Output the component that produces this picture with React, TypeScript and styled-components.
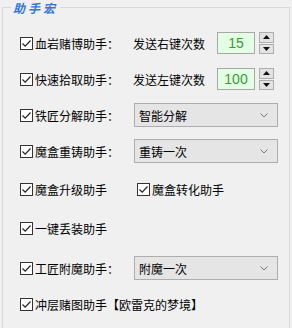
import React from 'react';
import styled, { createGlobalStyle } from 'styled-components';

const GlobalStyle = createGlobalStyle`
  html, body {
    margin: 0;
    padding: 0;
    background: #f0f0f0;
  }
  body {
    width: 292px;
    height: 328px;
    overflow: hidden;
    font-family: "Noto Sans CJK SC", "Noto Sans", sans-serif;
    font-size: 12px;
    color: #000;
  }
  #root {
    padding-top: 7px;
  }
`;

const GroupBox = styled.div`
  position: relative;
  margin: 0 2px;
  height: 330px;
  border: 1px solid #d9d9d9;
  border-bottom: none;
  box-sizing: border-box;
  padding: 23px 0 0 17px;
`;

const Legend = styled.div`
  position: absolute;
  top: -7px;
  left: 8px;
  padding: 0 2px;
  background: #f0f0f0;
  color: #3575dc;
  font-style: italic;
  font-weight: bold;
  font-size: 12px;
  letter-spacing: 3px;
  line-height: 14px;
`;

const Row = styled.div<{ $top: number }>`
  display: grid;
  grid-template-columns: 113px 1fr;
  align-items: center;
  height: 24px;
  margin-top: ${p => p.$top}px;
`;

const CheckLabel = styled.label<{ $offset?: number; $span?: boolean }>`
  display: flex;
  align-items: center;
  gap: 2px;
  margin-left: ${p => p.$offset || 0}px;
  white-space: nowrap;
  grid-column: ${p => (p.$span ? '1 / span 2' : 'auto')};
`;

const Box = styled.span`
  width: 13px;
  height: 13px;
  box-sizing: border-box;
  border: 1px solid #333;
  background: #fff;
  display: flex;
  align-items: center;
  justify-content: center;
  flex-shrink: 0;
`;

const Field = styled.div`
  display: flex;
  align-items: center;
`;

const FieldLabel = styled.span`
  width: 84px;
`;

const NumBox = styled.div`
  width: 38px;
  height: 22px;
  box-sizing: border-box;
  border: 1px solid #a7a7a7;
  background: #e4ffe4;
  color: #3a9a3a;
  font-family: "Liberation Sans", Arial, sans-serif;
  font-size: 14px;
  display: flex;
  align-items: center;
  justify-content: center;
`;

const Spin = styled.div`
  margin-left: 4px;
  width: 15px;
  height: 22px;
  display: flex;
  flex-direction: column;
  gap: 1px;
`;

const SpinBtn = styled.div`
  flex: 1;
  border: 1px solid #adadad;
  background: #e3e3e3;
  display: flex;
  align-items: center;
  justify-content: center;
`;

const Combo = styled.div`
  margin-left: 1px;
  width: 144px;
  height: 24px;
  box-sizing: border-box;
  border: 1px solid #adadad;
  background: #e5e5e5;
  display: flex;
  align-items: center;
  justify-content: space-between;
  padding: 0 9px 0 4px;
`;

function Check({ label, offset, span }: { label: string; offset?: number; span?: boolean }) {
  return (
    <CheckLabel $offset={offset} $span={span}>
      <Box>
        <svg width="11" height="11" viewBox="0 0 11 11">
          <polyline points="1.5,5.5 4.2,8.2 9.5,2.5" fill="none" stroke="#222" strokeWidth="1.2" />
        </svg>
      </Box>
      {label}
    </CheckLabel>
  );
}

function SpinField({ label, value }: { label: string; value: string }) {
  return (
    <Field>
      <FieldLabel>{label}</FieldLabel>
      <NumBox>{value}</NumBox>
      <Spin>
        <SpinBtn>
          <svg width="7" height="4" viewBox="0 0 7 4"><polygon points="0,4 7,4 3.5,0" fill="#111" /></svg>
        </SpinBtn>
        <SpinBtn>
          <svg width="7" height="4" viewBox="0 0 7 4"><polygon points="0,0 7,0 3.5,4" fill="#111" /></svg>
        </SpinBtn>
      </Spin>
    </Field>
  );
}

function Select({ value }: { value: string }) {
  return (
    <Combo>
      <span>{value}</span>
      <svg width="8" height="5" viewBox="0 0 8 5">
        <polyline points="0.5,0.5 4,4 7.5,0.5" fill="none" stroke="#777" strokeWidth="1" />
      </svg>
    </Combo>
  );
}

export default function App() {
  return (
    <>
      <GlobalStyle />
      <GroupBox>
        <Legend>助手宏</Legend>
        <Row $top={0}>
          <Check label="血岩赌博助手：" />
          <SpinField label="发送右键次数" value="15" />
        </Row>
        <Row $top={12}>
          <Check label="快速拾取助手：" />
          <SpinField label="发送左键次数" value="100" />
        </Row>
        <Row $top={12}>
          <Check label="铁匠分解助手：" />
          <Select value="智能分解" />
        </Row>
        <Row $top={12}>
          <Check label="魔盒重铸助手：" />
          <Select value="重铸一次" />
        </Row>
        <Row $top={14}>
          <Check label="魔盒升级助手" />
          <Check label="魔盒转化助手" offset={4} />
        </Row>
        <Row $top={15}>
          <Check label="一键丢装助手" />
        </Row>
        <Row $top={16}>
          <Check label="工匠附魔助手：" />
          <Select value="附魔一次" />
        </Row>
        <Row $top={12}>
          <Check label="冲层赌图助手【欧雷克的梦境】" span />
        </Row>
      </GroupBox>
    </>
  );
}
